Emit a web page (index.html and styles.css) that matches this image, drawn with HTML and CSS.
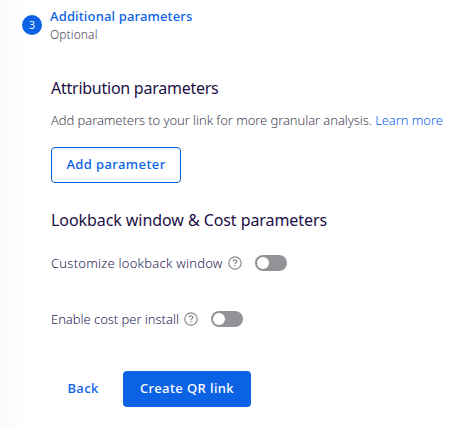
FILE: index.html
```html
<!DOCTYPE html>
<html lang="en">
<head>
    <meta charset="UTF-8">
    <meta name="viewport" content="width=device-width, initial-scale=1.0">
    <title>Create QR link</title>
    <link rel="stylesheet" href="styles.css">
</head>
<body>
    <div class="step">
        <div class="step-header">
            <div class="step-number">3</div>
            <div>
                <div class="step-title">Additional parameters</div>
                <div class="step-optional">Optional</div>
            </div>
        </div>
        <div class="step-content">
            <h2 class="attribution-title">Attribution parameters</h2>
            <p class="description">Add parameters to your link for more granular analysis. <a href="#">Learn more</a></p>
            <button type="button" class="btn btn-outline">Add parameter</button>

            <h2 class="lookback-title">Lookback window &amp; Cost parameters</h2>
            <div class="option">
                <span class="lookback-label">Customize lookback window</span>
                <svg class="help" viewBox="0 0 14 14">
                    <circle cx="7" cy="7" r="6.2"/>
                    <path d="M5.2 5.6C5.2 4.5 6 3.9 7 3.9s1.8.6 1.8 1.6c0 1.2-1.8 1.3-1.8 2.7M7 9.3v1.2"/>
                </svg>
                <span class="toggle"></span>
            </div>
            <div class="option">
                <span class="cost-label">Enable cost per install</span>
                <svg class="help" viewBox="0 0 14 14">
                    <circle cx="7" cy="7" r="6.2"/>
                    <path d="M5.2 5.6C5.2 4.5 6 3.9 7 3.9s1.8.6 1.8 1.6c0 1.2-1.8 1.3-1.8 2.7M7 9.3v1.2"/>
                </svg>
                <span class="toggle"></span>
            </div>
            <div class="actions">
                <button type="button" class="btn btn-text">Back</button>
                <button type="button" class="btn btn-primary">Create QR link</button>
            </div>
        </div>
    </div>
</body>
</html>
```
FILE: styles.css
```css
* {
    margin: 0;
    padding: 0;
    box-sizing: border-box;
}

body {
    font-family: "Noto Sans", "Open Sans", sans-serif;
    font-size: 13px;
    color: #2b1d54;
    min-height: 100vh;
    background: linear-gradient(to right, #fafafa, #fff 24px);
    overflow: hidden;
    white-space: nowrap;
}

.step {
    padding: 7px 0 0 22px;
}

.step-header {
    display: flex;
    align-items: center;
    gap: 8px;
    height: 36px;
}

.step-number {
    width: 20px;
    height: 20px;
    border-radius: 50%;
    background-color: #0b62e4;
    color: #fff;
    font-size: 10px;
    line-height: 20px;
    text-align: center;
}

.step-title {
    color: #0b62e4;
    font-weight: 500;
    line-height: 19px;
    letter-spacing: 0.15px;
}

.step-optional {
    color: #4a4558;
    font-size: 12px;
    font-weight: 300;
    line-height: 17px;
    letter-spacing: 0.1px;
}

.step-content {
    padding-left: 29px;
}

h2 {
    color: #1d0f45;
    font-size: 16px;
    font-weight: 400;
    line-height: 24px;
}

.attribution-title {
    margin-top: 33px;
    letter-spacing: -0.25px;
}

.description {
    margin: 10px 0 17px;
    color: #4a4558;
    font-weight: 300;
    line-height: 20px;
    letter-spacing: -0.08px;
}

.description a {
    color: #0b62e4;
    text-decoration: none;
}

.btn {
    height: 36px;
    padding-bottom: 2px;
    border: 1px solid transparent;
    border-radius: 4px;
    background: none;
    color: #0b62e4;
    font-family: inherit;
    font-size: 13px;
    font-weight: 500;
    letter-spacing: 0.4px;
}

.btn-outline {
    display: block;
    width: 130px;
    border-color: #0b62e4;
}

.lookback-title {
    margin: 25px 0 21px;
    letter-spacing: -0.07px;
}

.option {
    display: flex;
    align-items: center;
    height: 20px;
    margin-bottom: 36px;
    font-weight: 300;
}

.help {
    width: 14px;
    height: 14px;
    margin: 0 13px 0 5px;
    fill: none;
    stroke: #8b8b8d;
    stroke-width: 1.2;
}

.toggle {
    width: 32px;
    height: 16px;
    padding: 2px;
    border-radius: 8px;
    background-color: #919396;
}

.toggle::before {
    content: "";
    display: block;
    width: 12px;
    height: 12px;
    border-radius: 50%;
    background-color: #fff;
}

.lookback-label {
    width: 172px;
    letter-spacing: 0.23px;
}

.cost-label {
    width: 128px;
    letter-spacing: -0.04px;
}

.actions {
    display: flex;
    gap: 8px;
    margin-top: 42px;
}

.btn-text {
    width: 64px;
}

.btn-primary {
    width: 128px;
    background-color: #0b62e4;
    color: #fff;
}
```
